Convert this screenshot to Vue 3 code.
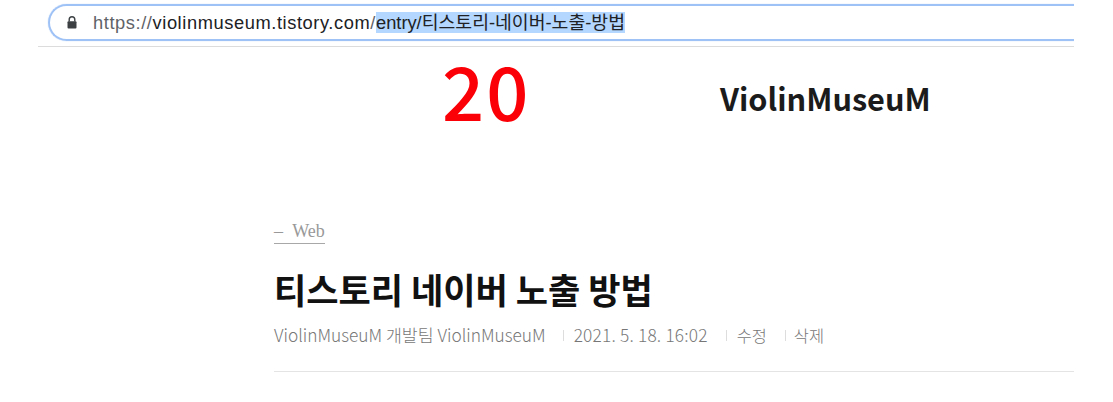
<template>
  <div class="page">
    <!-- address bar -->
    <div class="toolbar">
      <div class="address">
        <svg class="lock" width="10" height="13" viewBox="0 0 10 13">
          <path d="M2.2 5.5V3.6a2.8 2.8 0 0 1 5.6 0v1.9" fill="none" stroke="#3c4043" stroke-width="1.4" />
          <rect x="0.5" y="5.2" width="9" height="7.3" rx="1" fill="#3c4043" />
        </svg>
        <span class="url"><span class="muted">https://</span>violinmuseum.tistory.com<span class="muted">/</span><span class="selected">entry/티스토리-네이버-노출-방법</span></span>
      </div>
    </div>

    <!-- blog header -->
    <div class="masthead">
      <span class="count">{{ count }}</span>
      <span class="blog-name">{{ blogName }}</span>
    </div>

    <!-- post heading -->
    <div class="post">
      <a class="category">– Web</a>
      <h1 class="title">{{ title }}</h1>
      <div class="meta">
        <span>{{ blogName }} 개발팀 {{ blogName }}</span>
        <span class="meta-item date">{{ date }}</span>
        <span class="meta-item action">수정</span>
        <span class="meta-item action">삭제</span>
      </div>
    </div>
  </div>
</template>

<script setup>
const count = 20
const blogName = 'ViolinMuseuM'
const title = '티스토리 네이버 노출 방법'
const date = '2021. 5. 18. 16:02'
</script>

<style>
html,
body {
  background: #fff;
}
</style>

<style scoped>
.page {
  width: 1074px;
  height: 402px;
  overflow: hidden;
  font-family: "Noto Sans CJK KR", "Noto Sans", sans-serif;
  background: #fff;
}

.toolbar {
  margin-left: 38px;
  padding: 4px 0 5px 10px;
  border-bottom: 1px solid #dcdcdc;
}

.address {
  display: flex;
  align-items: center;
  height: 37px;
  box-sizing: border-box;
  padding-left: 17px;
  border: 2px solid #9fc2f6;
  border-right: none;
  border-radius: 19px 0 0 19px;
  box-shadow: 0 0 1px #9fc2f6;
}

.lock {
  margin-right: 16px;
}

.url {
  font-family: "Liberation Sans", "Noto Sans CJK KR", sans-serif;
  font-size: 18.3px;
  letter-spacing: 0.58px;
  line-height: 24px;
  color: #202124;
  white-space: nowrap;
}

.muted {
  color: #5f6368;
}

.selected {
  background: #b3d7fe;
  letter-spacing: 0;
}

.masthead {
  height: 93px;
  display: flex;
  align-items: center;
}

.count {
  margin-left: 442px;
  width: 278px;
  font-size: 74px;
  font-weight: 500;
  line-height: 93px;
  color: #fb0007;
  letter-spacing: 2px;
  transform: translateY(-5px);
}

.blog-name {
  font-size: 30.7px;
  font-weight: 700;
  line-height: 40px;
  color: #1b1b1b;
  padding-top: 8px;
}

.post {
  margin: 78px 0 0 274px;
  border-bottom: 1px solid #e4e4e4;
  padding-bottom: 24px;
}

.category {
  display: inline-block;
  font-family: "Liberation Serif", "Noto Sans CJK KR", serif;
  font-size: 18px;
  word-spacing: 5px;
  line-height: 23px;
  color: #999;
  border-bottom: 1px solid #a8a8a8;
}

.title {
  margin: 21px 0 0;
  font-size: 35.1px;
  font-weight: 700;
  line-height: 48px;
  color: #111;
}

.meta {
  display: flex;
  margin-top: 10px;
  font-size: 17.3px;
  font-weight: 300;
  line-height: 24px;
  color: #777;
}

.meta-item {
  position: relative;
  margin-left: 18px;
  padding-left: 11px;
}

.date {
  margin-left: 17px;
  letter-spacing: 0.2px;
}

.action {
  font-size: 16.4px;
}

.action:last-child {
  padding-left: 9px;
}

.meta-item::before {
  content: "";
  position: absolute;
  left: 0;
  top: 7px;
  height: 11px;
  border-left: 1px solid #ddd;
}
</style>
